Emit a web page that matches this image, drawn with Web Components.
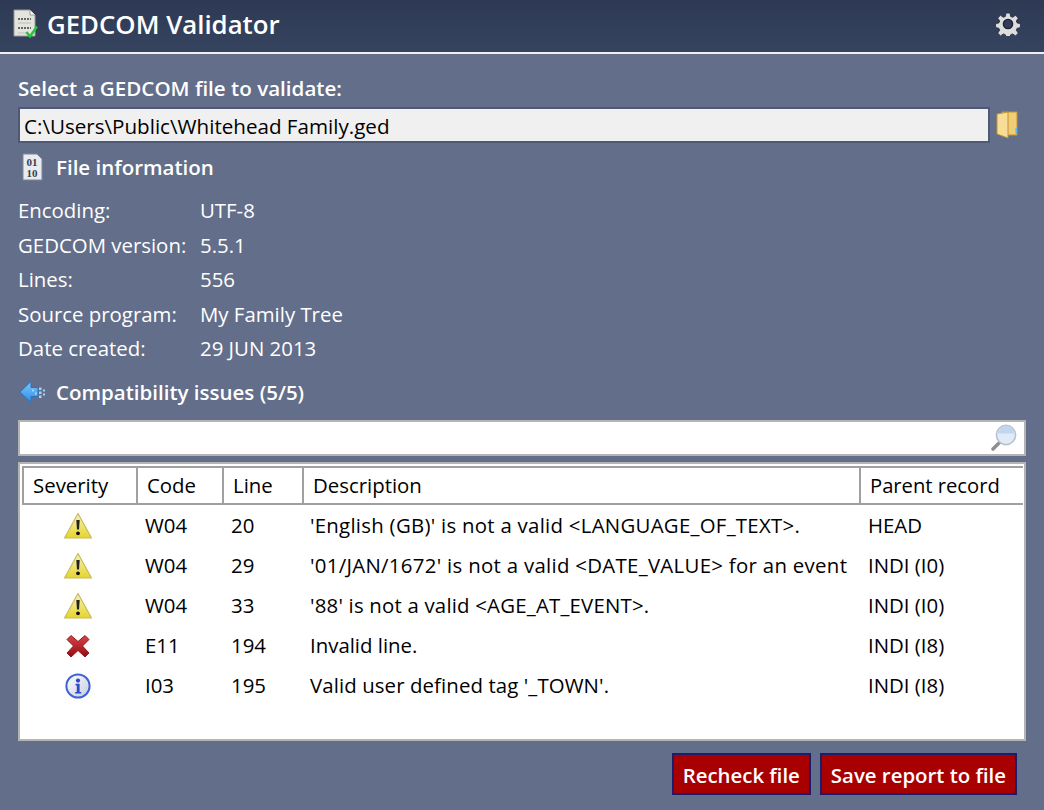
<!DOCTYPE html>
<html>
<head>
<meta charset="utf-8">
<title>GEDCOM Validator</title>
<style>
  html, body { margin: 0; padding: 0; height: 100%; }
  body { font-family: "Open Sans", "Noto Sans", sans-serif; background: #636e8a; overflow: hidden; }
</style>
</head>
<body>
<template id="t-icon-warn">
  <svg width="30" height="28" viewBox="0 0 30 28"><defs><linearGradient id="w" x1="0" y1="0" x2="0" y2="1"><stop offset="0" stop-color="#f5f2c4"/><stop offset="1" stop-color="#e6d52c"/></linearGradient></defs><path d="M15 1.5 L28.5 26 H1.5 Z" fill="url(#w)" stroke="#c9bc55" stroke-width="1.2" stroke-linejoin="round"/><path d="M13.3 8 h3.4 l-.7 9.5 h-2 z" fill="#222"/><circle cx="15" cy="21.3" r="1.9" fill="#111"/></svg>
</template>
<template id="t-icon-error">
  <svg width="30" height="28" viewBox="0 0 30 28"><defs><linearGradient id="e" x1="0" y1="0" x2="0" y2="1"><stop offset="0" stop-color="#d8444a"/><stop offset="1" stop-color="#97090e"/></linearGradient></defs><path d="M8 3.5 L15 9.5 L22 3.5 L26 7.5 L19.5 14 L26 21 L22 25 L15 18.5 L8 25 L4 21 L10.5 14 L4 7.5 Z" fill="url(#e)" stroke="#8c1b1e" stroke-width="1" stroke-linejoin="round"/></svg>
</template>
<template id="t-icon-info">
  <svg width="30" height="28" viewBox="0 0 30 28"><defs><linearGradient id="i" x1="0" y1="0" x2="1" y2="1"><stop offset="0" stop-color="#ffffff"/><stop offset="1" stop-color="#c4cbe0"/></linearGradient></defs><circle cx="15" cy="14" r="11.6" fill="url(#i)" stroke="#3f62d8" stroke-width="2"/><circle cx="15" cy="8.6" r="2.1" fill="#2a4bc4"/><path d="M12.6 11.8 h4 v8.2 h1.6 v1.6 h-6 v-1.6 h1.6 v-6.6 h-1.2 z" fill="#2a4bc4"/></svg>
</template>

<gedcom-app></gedcom-app>

<script>
class AppHeader extends HTMLElement {
  constructor() {
    super();
    this.attachShadow({ mode: "open" });
    this.shadowRoot.innerHTML = `
      <style>
        :host { display: flex; align-items: center; height: 54px; box-sizing: border-box; padding: 0 24px 4px 12px;
          background: linear-gradient(#2e3a54, #36435f); border-bottom: 2px solid #eef0f4; }
        .title { margin-left: 9px; font-size: 25.8px; font-weight: 600; color: #fff; flex: 1; }
        svg { display: block; }
      </style>
      <svg width="26" height="30" viewBox="0 0 26 30">
        <path d="M2 1 H18 L23 6 V27 H2 Z" fill="#e4e4df" stroke="#9a9a94" stroke-width="1"/>
        <path d="M18 1 V6 H23" fill="#fff" stroke="#9a9a94"/>
        <path d="M6 10 h13 M6 19 h13" stroke="#666" stroke-width="2.2" stroke-dasharray="2 1"/>
        <path d="M6 14 h13 M6 24 h9" stroke="#bbb" stroke-width="1.2"/>
        <path d="M14.5 23 l3.5 4.5 l7 -10" fill="none" stroke="#25c23a" stroke-width="2.4"/>
      </svg>
      <div class="title"><slot></slot></div>
      <svg width="24" height="24" viewBox="0 0 24 24">
        <path fill="#dddddd" stroke="#20283a" stroke-width=".8" fill-rule="evenodd" d="M10 1 h4 l.6 3.4 l2 .9 l2.9 -2 l2.8 2.8 l-2 2.9 l.9 2 l3.2 .6 v4 l-3.2 .6 l-.9 2 l2 2.9 l-2.8 2.8 l-2.9 -2 l-2 .9 l-.6 3.2 h-4 l-.6 -3.2 l-2 -.9 l-2.9 2 l-2.8 -2.8 l2 -2.9 l-.9 -2 l-3.2 -.6 v-4 l3.2 -.6 l.9 -2 l-2 -2.9 l2.8 -2.8 l2.9 2 l2 -.9 Z M12 7.5 a4.5 4.5 0 1 0 0 9 a4.5 4.5 0 1 0 0 -9 Z"/>
        <circle cx="12" cy="12" r="4.6" fill="none" stroke="#1c2436" stroke-width="1.4"/>
      </svg>
    `;
  }
}

class SectionTitle extends HTMLElement {
  constructor() {
    super();
    this.attachShadow({ mode: "open" });
    this.shadowRoot.innerHTML = `
      <style>
        :host { display: flex; align-items: center; color: #fff; font-size: 20.5px; font-weight: 600; height: 30px; }
        .ico { width: 38px; display: flex; }
      </style>
      <div class="ico"><slot name="icon"></slot></div>
      <div><slot></slot></div>
    `;
  }
}

class FilePicker extends HTMLElement {
  constructor() {
    super();
    this.attachShadow({ mode: "open" });
    this.shadowRoot.innerHTML = `
      <style>
        :host { display: flex; align-items: center; gap: 5px; padding-right: 6px; }
        .box { flex: 1; height: 36px; box-sizing: border-box; border: 2px solid #4e5a75; background: #f0f0f0;
          color: #000; font-size: 20.6px; line-height: 35px; padding-left: 4px; }
        svg { display: block; }
      </style>
      <div class="box"><slot></slot></div>
      <svg width="25" height="32" viewBox="0 0 25 32">
        <path d="M7 3 H22 V26 H7 Z" fill="#f0cd78" stroke="#c4932f"/>
        <path d="M2 5 L13 3 V29 L2 25 Z" fill="#f7dd96" stroke="#c4932f"/>
        <path d="M20.5 19 h1.5 v6 h-1.5 z" fill="#5ab7e6"/>
      </svg>
    `;
  }
}

class InfoList extends HTMLElement {
  constructor() {
    super();
    this.attachShadow({ mode: "open" });
    this.shadowRoot.innerHTML = `
      <style>
        :host { display: grid; grid-template-columns: 182px 1fr; grid-auto-rows: 34.5px; align-items: center;
          color: #fff; font-size: 20.4px; }
      </style>
      <slot></slot>
    `;
  }
}

class SearchBox extends HTMLElement {
  constructor() {
    super();
    this.attachShadow({ mode: "open" });
    this.shadowRoot.innerHTML = `
      <style>
        :host { display: flex; justify-content: flex-end; align-items: center; height: 36px; box-sizing: border-box;
          background: #fff; border: 2px solid #b4b4b4; padding-right: 6px; }
        svg { display: block; }
      </style>
      <svg width="28" height="28" viewBox="0 0 28 28">
        <path d="M11 17 L3 25" stroke="#8f8f8f" stroke-width="3.6" stroke-linecap="round"/>
        <circle cx="16" cy="11" r="9.6" fill="#e1ebf7" stroke="#b9c2cc" stroke-width="1.6"/>
        <path d="M8 9.5 a8 8 0 0 1 16 0 z" fill="#c3d5ec"/>
      </svg>
    `;
  }
}

const COLS = "114px 86px 80px 557px 1fr";

class IssueTable extends HTMLElement {
  constructor() {
    super();
    this.attachShadow({ mode: "open" });
    const heads = ["Severity", "Code", "Line", "Description", "Parent record"];
    this.shadowRoot.innerHTML = `
      <style>
        :host { display: block; height: 279px; box-sizing: border-box; background: #fff; border: 2px solid #b4b4b4;
          padding: 2px 1px 0 2px; color: #000; font-size: 20.4px; }
        .head { display: grid; grid-template-columns: ${COLS}; height: 39px; box-sizing: border-box;
          border-top: 2px solid #a0a0a0; border-bottom: 2px solid #a0a0a0; border-left: 2px solid #a0a0a0; }
        .head div { padding-left: 9px; line-height: 35px; border-right: 2px solid #a0a0a0; }
        .head div:last-child { border-right: 0; font-size: 20.2px; }
        .rows { padding-top: 2px; }
      </style>
      <div class="head">${heads.map(h => `<div>${h}</div>`).join("")}</div>
      <div class="rows"><slot></slot></div>
    `;
  }
}

class IssueRow extends HTMLElement {
  constructor() {
    super();
    this.attachShadow({ mode: "open" });
    const sev = this.getAttribute("severity");
    this.shadowRoot.innerHTML = `
      <style>
        :host { display: grid; grid-template-columns: ${COLS}; height: 39.8px; align-items: center; padding-left: 2px; }
        .sev { display: flex; justify-content: center; padding-right: 6px; }
        .cell { padding-left: 7px; padding-bottom: 2px; white-space: nowrap; }
        .desc { padding-left: 6px; letter-spacing: var(--desc-track, 0); }
        svg { display: block; }
      </style>
      <div class="sev"></div>
      <div class="cell">${this.getAttribute("code")}</div>
      <div class="cell">${this.getAttribute("line")}</div>
      <div class="cell desc"><slot></slot></div>
      <div class="cell">${this.getAttribute("parent")}</div>
    `;
    const tpl = document.getElementById("t-icon-" + sev);
    this.shadowRoot.querySelector(".sev").appendChild(tpl.content.cloneNode(true));
  }
}

class AppButton extends HTMLElement {
  constructor() {
    super();
    this.attachShadow({ mode: "open" });
    this.shadowRoot.innerHTML = `
      <style>
        :host { display: block; box-sizing: border-box; height: 42px; line-height: 40px; padding: 0 9px;
          background: #a80000; border: 2px solid #1d1b6b; color: #fff; font-size: 20.4px; font-weight: 600; }
      </style>
      <slot></slot>
    `;
  }
}

class GedcomApp extends HTMLElement {
  constructor() {
    super();
    this.attachShadow({ mode: "open" });
    this.shadowRoot.innerHTML = `
      <style>
        :host { display: block; width: 1044px; height: 810px; overflow: hidden; background: #636e8a; }
        main { padding: 18px 18px 0; display: flex; flex-direction: column; }
        .lbl { color: #fff; font-size: 20.6px; font-weight: 600; line-height: 32px; height: 35px; }
        .sec1 { margin-top: 9px; }
        info-list { margin-top: 11px; }
        .sec2 { margin-top: 11px; }
        search-box { margin-top: 13px; }
        issue-table { margin-top: 6px; }
        .btns { display: flex; justify-content: flex-end; gap: 9px; margin-top: 12px; padding-right: 9px; }
        svg { display: block; }
      </style>
      <app-header>GEDCOM Validator</app-header>
      <main>
        <div class="lbl">Select a GEDCOM file to validate:</div>
        <file-picker>C:\\Users\\Public\\Whitehead Family.ged</file-picker>
        <section-title class="sec1">
          <svg slot="icon" width="28" height="28" viewBox="0 0 28 28">
            <path d="M5 1 H19 L24 6 V27 H5 Z" fill="#e9ebee" stroke="#7f8794"/>
            <text x="8.5" y="13" font-family="Liberation Serif, serif" font-size="11" font-weight="700" fill="#3a3f4a">01</text>
            <text x="8.5" y="23.5" font-family="Liberation Serif, serif" font-size="11" font-weight="700" fill="#3a3f4a">10</text>
          </svg>
          File information
        </section-title>
        <info-list>
          <div>Encoding:</div><div>UTF-8</div>
          <div>GEDCOM version:</div><div>5.5.1</div>
          <div>Lines:</div><div>556</div>
          <div>Source program:</div><div>My Family Tree</div>
          <div>Date created:</div><div>29 JUN 2013</div>
        </info-list>
        <section-title class="sec2">
          <svg slot="icon" width="30" height="26" viewBox="0 0 30 26">
            <defs><linearGradient id="ar" x1="0" y1="0" x2="0" y2="1"><stop offset="0" stop-color="#7cc6f7"/><stop offset="1" stop-color="#2f8fe4"/></linearGradient></defs>
            <path d="M2 13 L13 2.5 V8.5 H20 V17.5 H13 V23.5 Z" fill="url(#ar)" stroke="#2a72c4" stroke-linejoin="round"/>
            <path d="M21 8.5 h2.5 v2.5 h-2.5z M21 12.5 h2.5 v2.5 h-2.5z M21 16.5 h2.5 v2.5 h-2.5z M25 10.5 h2 v2 h-2z M25 14.5 h2 v2 h-2z M14 10.5 h2 v2 h-2z M17 13.5 h2 v2 h-2z" fill="#a4d4f8"/>
          </svg>
          Compatibility issues (5/5)
        </section-title>
        <search-box></search-box>
        <issue-table>
          <issue-row style="--desc-track:.27px" severity="warn" code="W04" line="20" parent="HEAD">'English (GB)' is not a valid &lt;LANGUAGE_OF_TEXT&gt;.</issue-row>
          <issue-row style="--desc-track:.3px" severity="warn" code="W04" line="29" parent="INDI (I0)">'01/JAN/1672' is not a valid &lt;DATE_VALUE&gt; for an event</issue-row>
          <issue-row style="--desc-track:.2px" severity="warn" code="W04" line="33" parent="INDI (I0)">'88' is not a valid &lt;AGE_AT_EVENT&gt;.</issue-row>
          <issue-row severity="error" code="E11" line="194" parent="INDI (I8)">Invalid line.</issue-row>
          <issue-row style="--desc-track:.1px" severity="info" code="I03" line="195" parent="INDI (I8)">Valid user defined tag '_TOWN'.</issue-row>
        </issue-table>
        <div class="btns">
          <app-button>Recheck file</app-button>
          <app-button>Save report to file</app-button>
        </div>
      </main>
    `;
  }
}

customElements.define("app-header", AppHeader);
customElements.define("section-title", SectionTitle);
customElements.define("file-picker", FilePicker);
customElements.define("info-list", InfoList);
customElements.define("search-box", SearchBox);
customElements.define("issue-table", IssueTable);
customElements.define("issue-row", IssueRow);
customElements.define("app-button", AppButton);
customElements.define("gedcom-app", GedcomApp);
</script>
</body>
</html>
